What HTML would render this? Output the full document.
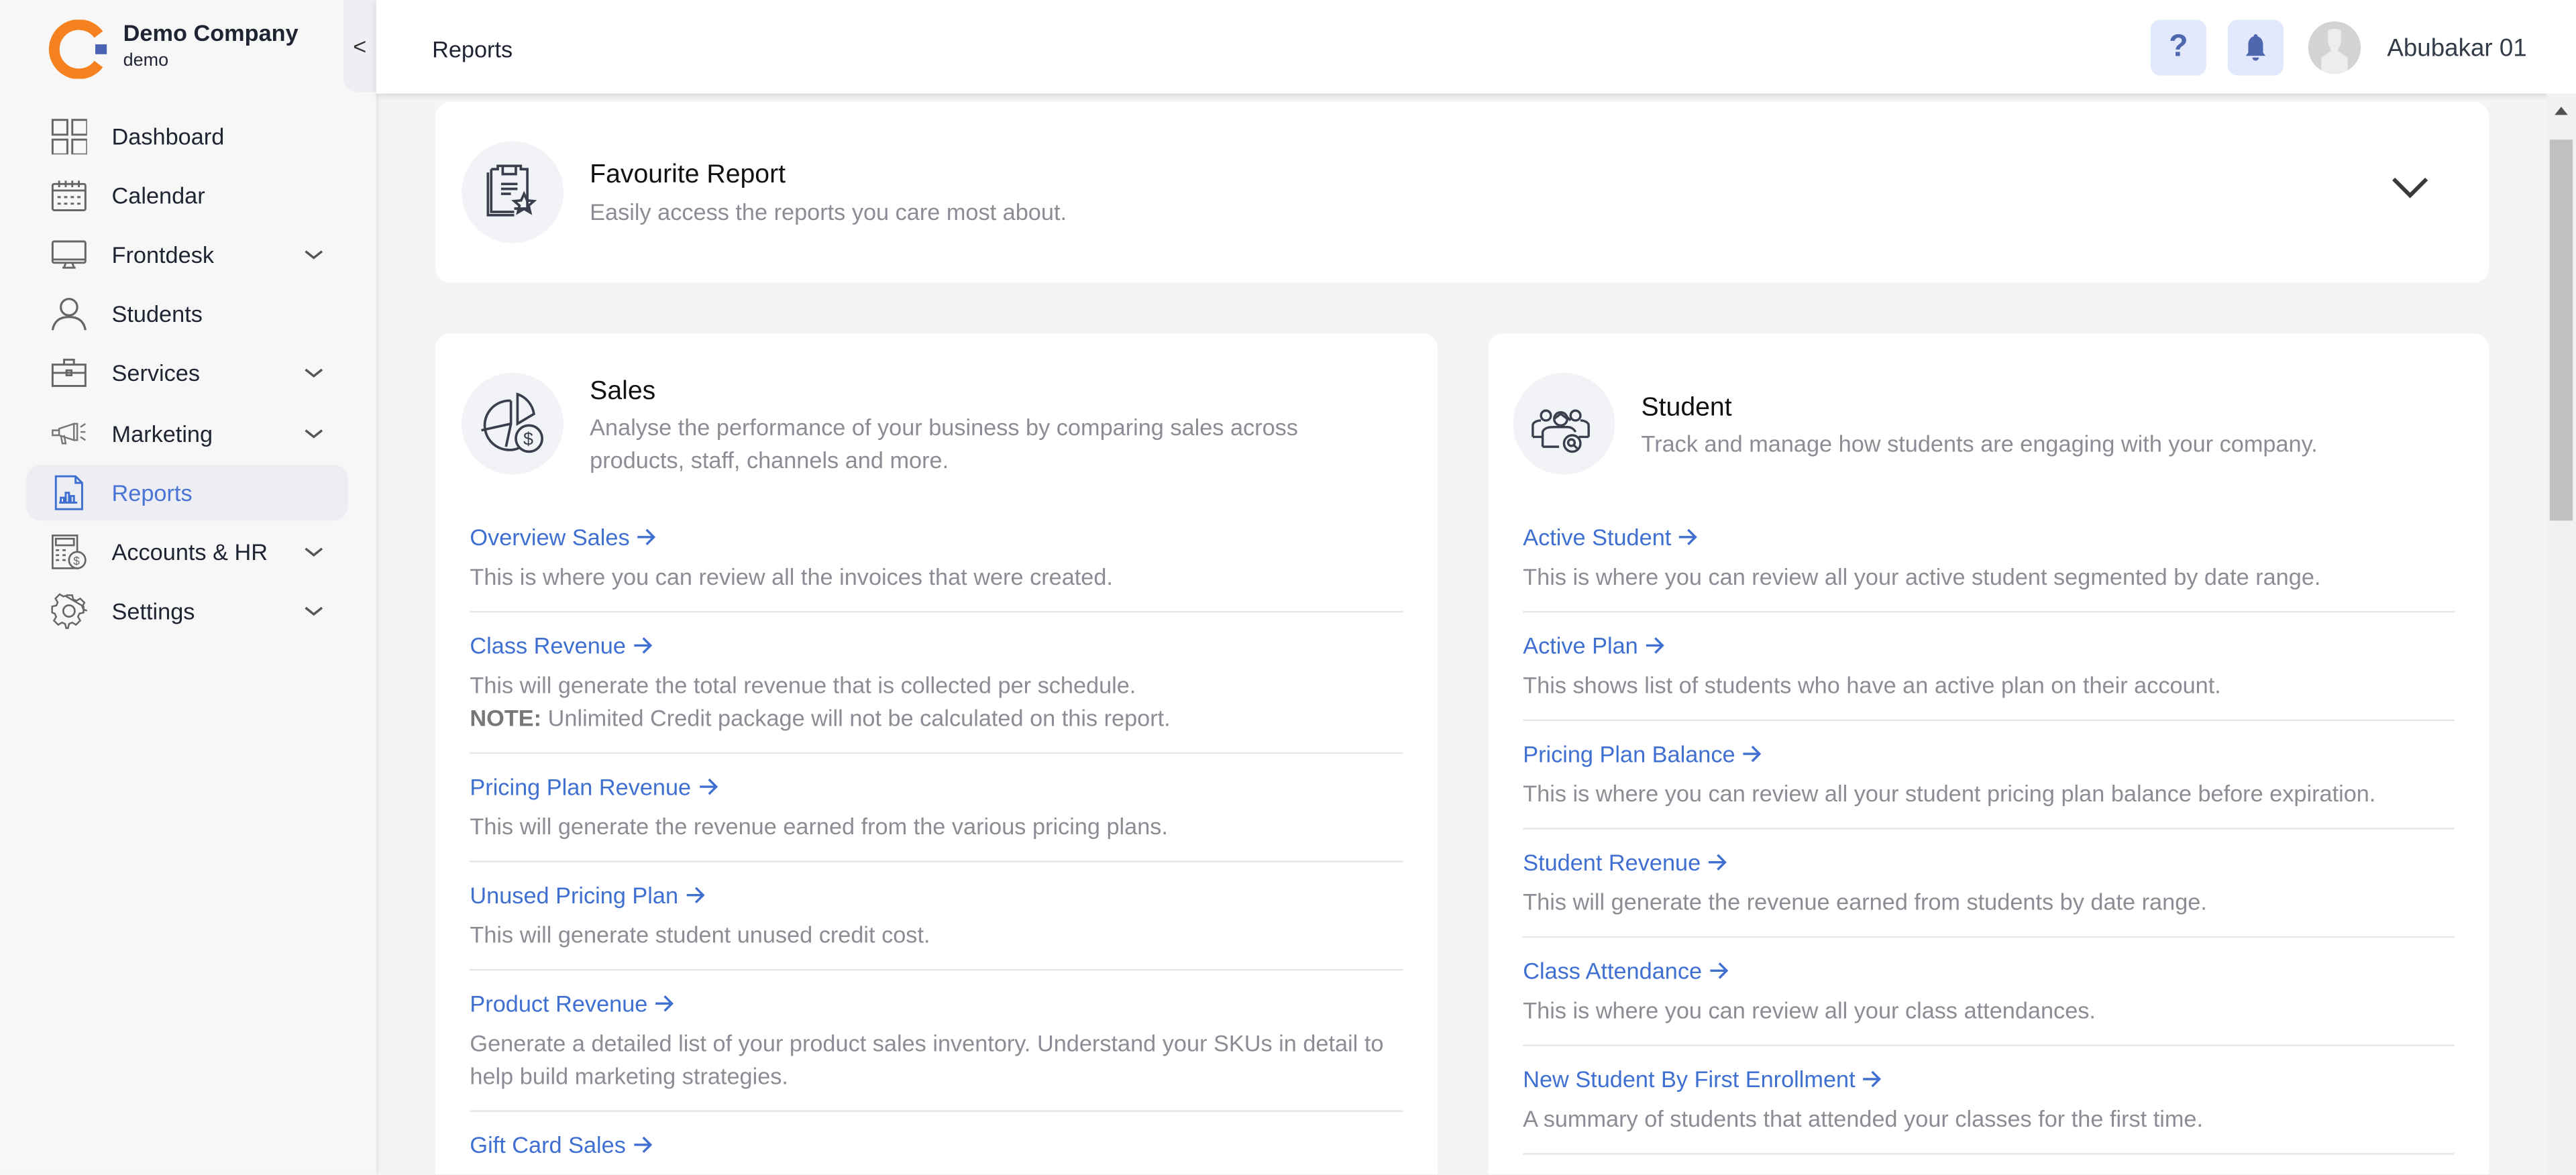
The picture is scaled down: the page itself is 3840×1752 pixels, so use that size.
<!DOCTYPE html>
<html><head><meta charset="utf-8"><style>
*{box-sizing:border-box;margin:0;padding:0}
html,body{width:3840px;height:1752px;overflow:hidden;background:#f4f4f4}
#s{position:absolute;left:0;top:0;width:1568px;height:715px;transform:scale(2.44898);transform-origin:0 0;font-family:"Liberation Sans",sans-serif;background:#f4f4f4;overflow:hidden}
.abs{position:absolute}
#side{left:0;top:0;width:229px;height:715px;background:#f7f7f7;box-shadow:1px 0 3px rgba(0,0,0,.08)}
.nav{position:absolute;left:16px;width:196px;height:34px;border-radius:9px}
.nav .t{position:absolute;left:52px;top:9px;font-size:14px;color:#1f2433}
.nav svg.i{position:absolute;left:15px;top:6px}
.nav .ch{position:absolute;left:169px;top:13px}
#hdr{left:229px;top:0;width:1339px;height:57px;background:#fff;box-shadow:0 1px 4px rgba(0,0,0,.15)}
.card{position:absolute;background:#fff;border-radius:9px}
.circ{position:absolute;width:62px;height:62px;border-radius:50%;background:#f2f3f7}
.ttl{position:absolute;font-size:16px;color:#111}
.sub{position:absolute;font-size:14px;color:#8b8d94;line-height:20px}
.item{position:absolute;left:21px;right:21px;border-bottom:1px solid #e6e6e6}
.item a{display:block;color:#3f6fd1;font-size:14px;text-decoration:none}
.item a svg{vertical-align:-1px;margin-left:4px}
.item p{color:#8b8d94;font-size:14px;line-height:20px;margin-top:6px}
</style></head><body><div id="s">
<svg width="0" height="0" style="position:absolute"><defs><symbol id="ar" viewBox="0 0 12 12"><path d="M1 6h10M6.5 1.5L11 6l-4.5 4.5" fill="none" stroke="#3f6fd1" stroke-width="1.4"/></symbol></defs></svg>
<div id="side" class="abs">
 <svg class="abs" style="left:28px;top:12px" width="38" height="36" viewBox="0 0 38 36"><path d="M32 9 A15 15 0 1 0 32 27" fill="none" stroke="#f5821f" stroke-width="6.5"/><rect x="30" y="15" width="7" height="6" fill="#4a63b3"/></svg>
 <div class="abs" style="left:75px;top:12px;font-size:14px;font-weight:bold;color:#1f2433">Demo Company</div>
 <div class="abs" style="left:75px;top:31px;font-size:11px;color:#1f2433">demo</div>
 <div class="abs" style="left:209px;top:0;width:20px;height:56px;background:#eeeff3;border-radius:0 0 0 8px;font-size:14px;color:#333;text-align:center;line-height:56px">&lt;</div>
 <div class="nav" style="top:66px"><svg class="i" width="22" height="22" fill="none" stroke="#666" stroke-width="1.2"><rect x="1" y="1" width="9" height="9"/><rect x="13" y="1" width="9" height="9"/><rect x="1" y="13" width="9" height="9"/><rect x="13" y="13" width="9" height="9"/></svg><span class="t">Dashboard</span></div>
 <div class="nav" style="top:102px"><svg class="i" width="22" height="22" fill="none" stroke="#666" stroke-width="1.2"><rect x="1" y="4" width="20" height="16" rx="1"/><path d="M1 8h20M5 2v4M9 2v4M13 2v4M17 2v4M4 12h2M8 12h2M12 12h2M16 12h2M4 16h2M8 16h2M12 16h2M16 16h2"/></svg><span class="t">Calendar</span></div>
 <div class="nav" style="top:138px"><svg class="i" width="22" height="22" fill="none" stroke="#666" stroke-width="1.2"><rect x="1" y="3" width="20" height="13" rx="1"/><path d="M1 14h20M9 16l-1 3h6l-1-3M7 19h8"/></svg><span class="t">Frontdesk</span><svg class="ch" width="12" height="8"><path d="M1 2l5 4 5-4" fill="none" stroke="#555" stroke-width="1.4"/></svg></div>
 <div class="nav" style="top:174px"><svg class="i" width="22" height="22" fill="none" stroke="#666" stroke-width="1.3"><circle cx="11" cy="7" r="5"/><path d="M1 21c1-6 5-8 10-8s9 2 10 8"/></svg><span class="t">Students</span></div>
 <div class="nav" style="top:210px"><svg class="i" width="22" height="22" fill="none" stroke="#666" stroke-width="1.2"><rect x="1" y="6" width="20" height="13"/><path d="M8 6V3h6v3M1 11h20"/><rect x="9.5" y="9.5" width="3" height="3"/></svg><span class="t">Services</span><svg class="ch" width="12" height="8"><path d="M1 2l5 4 5-4" fill="none" stroke="#555" stroke-width="1.4"/></svg></div>
 <div class="nav" style="top:247px"><svg class="i" width="22" height="22" fill="none" stroke="#777" stroke-width="1"><path d="M1 9h4v3H1zM5 8l9-3v10l-9-3zM6 12l1 5h2l-1-5M14 5h2v10h-2M18 7l3-2M18 10h3M18 13l3 2"/></svg><span class="t">Marketing</span><svg class="ch" width="12" height="8"><path d="M1 2l5 4 5-4" fill="none" stroke="#555" stroke-width="1.4"/></svg></div>
 <div class="nav" style="top:283px;background:#edeef3"><svg class="i" width="22" height="22" fill="none" stroke="#3f6fd1" stroke-width="1.2"><path d="M3 1h12l4 4v16H3zM15 1v4h4"/><path d="M6 17v-3h2v3M9 17v-6h2v6M12 17v-4h2v4M5 17h11"/></svg><span class="t" style="color:#4a73d6">Reports</span></div>
 <div class="nav" style="top:319px"><svg class="i" width="22" height="22" fill="none" stroke="#666" stroke-width="1.1"><rect x="1" y="1" width="15" height="20"/><rect x="3" y="3" width="11" height="4"/><path d="M3 10h2M7 10h2M3 13h2M7 13h2M3 16h2M7 16h2"/><circle cx="16" cy="16" r="5" fill="#f7f7f7"/><text x="13.6" y="19" font-size="7" fill="#666" stroke="none">$</text></svg><span class="t">Accounts &amp; HR</span><svg class="ch" width="12" height="8"><path d="M1 2l5 4 5-4" fill="none" stroke="#555" stroke-width="1.4"/></svg></div>
 <div class="nav" style="top:355px"><svg class="i" width="22" height="22" fill="none" stroke="#666" stroke-width="1.1"><path d="M9 1.5h4l.7 2.8 2.1.9 2.5-1.5 2.8 2.8-1.5 2.5.9 2.1 2.8.7v0M20.5 9v4l-2.8.7-.9 2.1 1.5 2.5-2.8 2.8-2.5-1.5-2.1.9-.7 2.8H9l-.7-2.8-2.1-.9-2.5 1.5-2.8-2.8 1.5-2.5-.9-2.1L-.3 13V9l2.8-.7.9-2.1L1.9 3.7 4.7.9 7.2 2.4 8.3 1.9z" transform="translate(1 0) scale(.92)"/><circle cx="11" cy="11" r="3.5"/></svg><span class="t">Settings</span><svg class="ch" width="12" height="8"><path d="M1 2l5 4 5-4" fill="none" stroke="#555" stroke-width="1.4"/></svg></div>
</div>
<div id="hdr" class="abs">
 <div class="abs" style="left:34px;top:22px;font-size:14px;color:#1f2433">Reports</div>
 <div class="abs" style="left:1080px;top:12px;width:34px;height:34px;border-radius:6px;background:#e3e9fd;color:#4e68b0;font-weight:bold;font-size:19px;text-align:center;line-height:34px">?</div>
 <div class="abs" style="left:1127px;top:12px;width:34px;height:34px;border-radius:6px;background:#e3e9fd"><svg width="34" height="34"><path d="M17 10c-3 0-4.5 2.5-4.5 5v5l-1.5 2h12l-1.5-2v-5c0-2.5-1.5-5-4.5-5z" fill="#4e68b0"/><path d="M15 23a2 2 0 0 0 4 0z" fill="#4e68b0"/><circle cx="17" cy="10" r="1.2" fill="#4e68b0"/></svg></div>
 <div class="abs" style="left:1176px;top:13px;width:32px;height:32px;border-radius:50%;background:#d3d3d3;overflow:hidden"><svg width="32" height="32"><path d="M12 6c0-2 8-2 8 0v6c0 3-2 5-2 6l6 4v12H8V22l6-4c0-1-2-3-2-6z" fill="#eceeee"/></svg></div>
 <div class="abs" style="left:1224px;top:21px;font-size:15px;color:#333a48">Abubakar 01</div>
</div>
<div class="abs" style="left:1550px;top:57px;width:18px;height:658px;background:#f1f1f1"><div class="abs" style="left:5px;top:8px;border-left:4px solid transparent;border-right:4px solid transparent;border-bottom:5px solid #505050"></div><div class="abs" style="left:2px;top:28px;width:14px;height:232px;background:#c1c1c1"></div></div>

<div class="card" style="left:265px;top:62px;width:1250px;height:110px">
 <div class="circ" style="left:16px;top:24px"><svg width="62" height="62" fill="none" stroke="#3a3f4d" stroke-width="1.5"><path d="M18 17h4v-2h14v2h4v24h-8M18 17v26h14"/><path d="M16 19v26h16"/><rect x="25" y="15" width="8" height="5"/><path d="M24 26h10M24 29h10M24 32h6"/><path d="M38 32l1.8 4 4.2.4-3.2 2.8 1 4.2-3.8-2.2-3.8 2.2 1-4.2-3.2-2.8 4.2-.4z"/></svg></div>
 <div class="ttl" style="left:94px;top:36px">Favourite Report</div>
 <div class="sub" style="left:94px;top:57px">Easily access the reports you care most about.</div>
 <svg class="abs" style="left:1190px;top:44px" width="24" height="16"><path d="M2 3l10 10 10-10" fill="none" stroke="#3a3a3a" stroke-width="2.4"/></svg>
</div>

<div class="card" style="left:265px;top:203px;width:610px;height:530px">
 <div class="circ" style="left:16px;top:24px"><svg width="62" height="62" fill="none" stroke="#3a3f4d" stroke-width="1.5"><path d="M30 17a15 15 0 1 0 8 27"/><path d="M12 35l18-4v-14M30 31l-3 14"/><path d="M34 13a15 15 0 0 1 10 12l-10 6z"/><circle cx="41" cy="40" r="8" fill="#f2f3f7"/><text x="37.5" y="44" font-size="11" fill="#3a3f4d" stroke="none" font-family="Liberation Sans">$</text></svg></div>
 <div class="ttl" style="left:94px;top:27px">Sales</div>
 <div class="sub" style="left:94px;top:47px">Analyse the performance of your business by comparing sales across<br>products, staff, channels and more.</div>
 <div class="item" style="top:116px;height:54px"><a>Overview Sales<svg width="12" height="12"><use href="#ar"/></svg></a><p>This is where you can review all the invoices that were created.</p></div>
 <div class="item" style="top:182px;height:74px"><a>Class Revenue<svg width="12" height="12"><use href="#ar"/></svg></a><p>This will generate the total revenue that is collected per schedule.<br><b style="color:#777">NOTE:</b> Unlimited Credit package will not be calculated on this report.</p></div>
 <div class="item" style="top:268px;height:54px"><a>Pricing Plan Revenue<svg width="12" height="12"><use href="#ar"/></svg></a><p>This will generate the revenue earned from the various pricing plans.</p></div>
 <div class="item" style="top:334px;height:54px"><a>Unused Pricing Plan<svg width="12" height="12"><use href="#ar"/></svg></a><p>This will generate student unused credit cost.</p></div>
 <div class="item" style="top:400px;height:74px"><a>Product Revenue<svg width="12" height="12"><use href="#ar"/></svg></a><p>Generate a detailed list of your product sales inventory. Understand your SKUs in detail to help build marketing strategies.</p></div>
 <div class="item" style="top:486px;height:54px;border:0"><a>Gift Card Sales<svg width="12" height="12"><use href="#ar"/></svg></a></div>
</div>

<div class="card" style="left:906px;top:203px;width:609px;height:530px">
 <div class="circ" style="left:15px;top:24px"><svg width="62" height="62" fill="none" stroke="#3a3f4d" stroke-width="1.4"><circle cx="20" cy="26" r="3"/><circle cx="38" cy="26" r="3"/><path d="M12 39v-7c0-2 3-3 5-3M46 39v-7c0-2-3-3-5-3M12 39h6M40 39h6"/><circle cx="29" cy="28" r="4"/><path d="M25 28l4-3 4 3M33 27l2 2"/><path d="M18 45v-9c1-3 5-3 7-3h8c2 0 4 1 5 3M18 45h10"/><circle cx="36" cy="43" r="5" fill="#f2f3f7"/><circle cx="35.5" cy="42.5" r="2"/><path d="M37 44l2 2"/></svg></div>
 <div class="ttl" style="left:93px;top:37px">Student</div>
 <div class="sub" style="left:93px;top:57px">Track and manage how students are engaging with your company.</div>
 <div class="item" style="top:116px;height:54px"><a>Active Student<svg width="12" height="12"><use href="#ar"/></svg></a><p>This is where you can review all your active student segmented by date range.</p></div>
 <div class="item" style="top:182px;height:54px"><a>Active Plan<svg width="12" height="12"><use href="#ar"/></svg></a><p>This shows list of students who have an active plan on their account.</p></div>
 <div class="item" style="top:248px;height:54px"><a>Pricing Plan Balance<svg width="12" height="12"><use href="#ar"/></svg></a><p>This is where you can review all your student pricing plan balance before expiration.</p></div>
 <div class="item" style="top:314px;height:54px"><a>Student Revenue<svg width="12" height="12"><use href="#ar"/></svg></a><p>This will generate the revenue earned from students by date range.</p></div>
 <div class="item" style="top:380px;height:54px"><a>Class Attendance<svg width="12" height="12"><use href="#ar"/></svg></a><p>This is where you can review all your class attendances.</p></div>
 <div class="item" style="top:446px;height:54px"><a>New Student By First Enrollment<svg width="12" height="12"><use href="#ar"/></svg></a><p>A summary of students that attended your classes for the first time.</p></div>
</div>
</div></body></html>
